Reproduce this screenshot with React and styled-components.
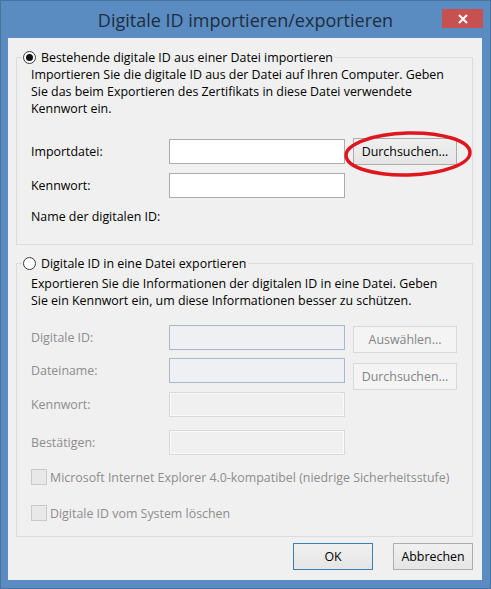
import styled, { createGlobalStyle } from "styled-components";

const GlobalStyle = createGlobalStyle`
  html, body {
    margin: 0;
    padding: 0;
    background: #ffffff;
  }
  * {
    box-sizing: border-box;
  }
`;

const Window = styled.div`
  width: 491px;
  height: 589px;
  background: #5a8bc1;
  border: 1px solid #46739f;
  display: flex;
  flex-direction: column;
  font-family: "Open Sans", "Noto Sans", "Liberation Sans", sans-serif;
  font-size: 12.4px;
  color: #000;
`;

const TitleBar = styled.div`
  height: 37px;
  display: grid;
  grid-template-columns: 1fr auto 1fr;
  align-items: start;
`;

const Title = styled.div`
  grid-column: 2;
  font-size: 18px;
  line-height: 20px;
  padding-top: 9px;
  color: #1f2e3e;
  white-space: nowrap;
`;

const CloseButton = styled.div`
  grid-column: 3;
  justify-self: end;
  margin: 8px 7px 0 0;
  width: 41px;
  height: 19px;
  background: #c75050;
  display: flex;
  align-items: center;
  justify-content: center;
`;

const Content = styled.div`
  flex: 1;
  margin: 0 8px 8px 7px;
  background: #f0f0f0;
  padding: 11px 9px 0 8px;
  display: flex;
  flex-direction: column;
`;

const Group = styled.fieldset`
  margin: 0 0 ${(p) => p.$gap || 0}px 0;
  border: 1px solid #dcdcdc;
  padding: 0 0 ${(p) => p.$bottom}px 14px;
  min-width: 0;
`;

const Legend = styled.legend`
  margin-left: -9px;
  padding: 0 2px 0 1px;
  display: flex;
  align-items: center;
  gap: 5px;
  line-height: 17px;
  white-space: nowrap;
`;

const Radio = styled.span`
  width: 13px;
  height: 13px;
  border-radius: 50%;
  border: 1px solid #3a3a3a;
  background: #fff;
  display: flex;
  align-items: center;
  justify-content: center;
  &::after {
    content: "";
    width: 7px;
    height: 7px;
    border-radius: 50%;
    background: ${(p) => (p.$checked ? "#111" : "transparent")};
  }
`;

const Para = styled.p`
  margin: 0;
  line-height: 17px;
  padding-top: ${(p) => p.$top || 0}px;
`;

const FormGrid = styled.div`
  display: grid;
  grid-template-columns: 130px 176px 104px;
  column-gap: 8px;
  margin-top: ${(p) => p.$top}px;
`;

const Label = styled.div`
  grid-column: 1;
  height: ${(p) => p.$h || 25}px;
  margin-bottom: ${(p) => p.$mb || 0}px;
  display: flex;
  align-items: center;
  color: ${(p) => (p.$disabled ? "#8d8d8d" : "#000")};
  white-space: nowrap;
`;

const Input = styled.div`
  grid-column: 2;
  height: 25px;
  margin-bottom: ${(p) => p.$mb || 0}px;
  border: 1px solid
    ${(p) =>
      p.$variant === "blue" ? "#a6b8cd" : p.$variant === "off" ? "#d9d9d9" : "#acacac"};
  background: ${(p) =>
    p.$variant === "blue" ? "#eef0f3" : p.$variant === "off" ? "#f0f0f0" : "#fff"};
  box-shadow: ${(p) =>
    p.$variant === "off" ? "inset 0 0 0 1px #fafafa" : "none"};
`;

const Button = styled.div`
  height: 27px;
  display: flex;
  align-items: center;
  justify-content: center;
  border: 1px solid ${(p) => (p.$disabled ? "#d9d9d9" : "#acacac")};
  background: ${(p) =>
    p.$disabled ? "#f4f4f4" : "linear-gradient(#f0f0f0, #e5e5e5)"};
  color: ${(p) => (p.$disabled ? "#838383" : "#000")};
  white-space: nowrap;
`;

const SideButton = styled(Button)`
  grid-column: 3;
  margin-top: ${(p) => p.$top || 0}px;
  position: relative;
`;

const Ellipse = styled.svg`
  position: absolute;
  left: -11px;
  top: -9px;
  width: 130px;
  height: 48px;
  pointer-events: none;
  overflow: visible;
`;

const CheckRow = styled.div`
  display: flex;
  align-items: center;
  gap: 3px;
  height: 16px;
  margin-top: ${(p) => p.$top}px;
  color: #8d8d8d;
  white-space: nowrap;
`;

const Check = styled.span`
  width: 16px;
  height: 16px;
  border: 1px solid #c9c9c9;
  background: #e8e8e8;
  flex: none;
`;

const Footer = styled.div`
  display: flex;
  justify-content: flex-end;
  gap: 20px;
  margin-top: 6px;
`;

const DialogButton = styled(Button)`
  width: 80px;
  border-color: ${(p) => (p.$primary ? "#3c7fb1" : "#acacac")};
`;

const App = () => {
  return (
    <>
      <GlobalStyle />
      <Window>
        <TitleBar>
          <Title>Digitale ID importieren/exportieren</Title>
          <CloseButton>
            <svg width="10" height="10" viewBox="0 0 10 10">
              <path d="M1 1 L9 9 M9 1 L1 9" stroke="#fff" strokeWidth="2" />
            </svg>
          </CloseButton>
        </TitleBar>
        <Content>
          <Group $bottom={19} $gap={10}>
            <Legend>
              <Radio $checked />
              Bestehende digitale ID aus einer Datei importieren
            </Legend>
            <Para>
              Importieren Sie die digitale ID aus der Datei auf Ihren Computer. Geben
              <br />
              Sie das beim Exportieren des Zertifikats in diese Datei verwendete
              <br />
              Kennwort ein.
            </Para>
            <FormGrid $top={22}>
              <Label $mb={9}>Importdatei:</Label>
              <Input $mb={9} />
              <SideButton $top={-1}>
                Durchsuchen...
                <Ellipse viewBox="0 0 130 48">
                  <ellipse
                    cx="65"
                    cy="24"
                    rx="62"
                    ry="21"
                    fill="none"
                    stroke="#e0161f"
                    strokeWidth="3.5"
                    transform="rotate(-1.5 65 24)"
                  />
                </Ellipse>
              </SideButton>
              <Label $mb={10}>Kennwort:</Label>
              <Input $mb={10} />
              <Label $h={17}>Name der digitalen ID:</Label>
            </FormGrid>
          </Group>
          <Group $bottom={15}>
            <Legend>
              <Radio />
              Digitale ID in eine Datei exportieren
            </Legend>
            <Para $top={3}>
              Exportieren Sie die Informationen der digitalen ID in eine Datei. Geben
              <br />
              Sie ein Kennwort ein, um diese Informationen besser zu schützen.
            </Para>
            <FormGrid $top={16}>
              <Label $disabled $mb={8}>Digitale ID:</Label>
              <Input $variant="blue" $mb={8} />
              <SideButton $disabled $top={1}>Auswählen...</SideButton>
              <Label $disabled $mb={9}>Dateiname:</Label>
              <Input $variant="blue" $mb={9} />
              <SideButton $disabled $top={5}>Durchsuchen...</SideButton>
              <Label $disabled $mb={13}>Kennwort:</Label>
              <Input $variant="off" $mb={13} />
              <Label $disabled>Bestätigen:</Label>
              <Input $variant="off" />
            </FormGrid>
            <CheckRow $top={14}>
              <Check />
              Microsoft Internet Explorer 4.0-kompatibel (niedrige Sicherheitsstufe)
            </CheckRow>
            <CheckRow $top={20}>
              <Check />
              Digitale ID vom System löschen
            </CheckRow>
          </Group>
          <Footer>
            <DialogButton $primary>OK</DialogButton>
            <DialogButton>Abbrechen</DialogButton>
          </Footer>
        </Content>
      </Window>
    </>
  );
};

export default App;
